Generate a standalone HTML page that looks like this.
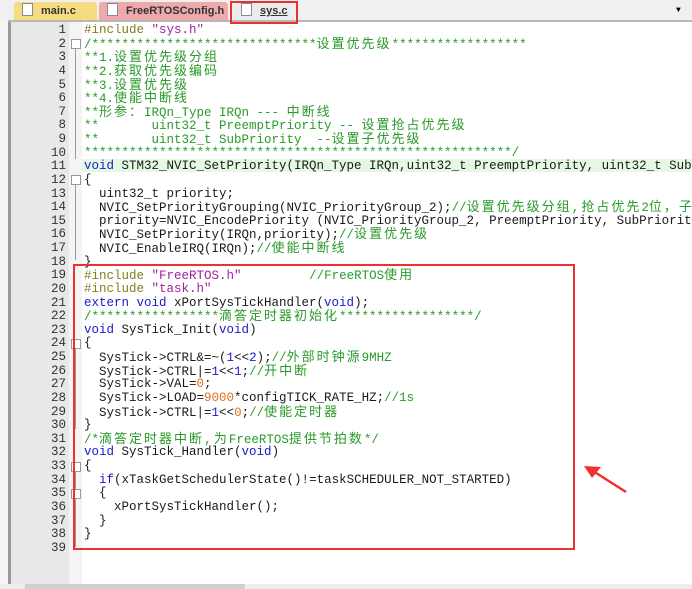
<!DOCTYPE html>
<html><head><meta charset="utf-8"><style>
body{margin:0;width:692px;height:589px;background:#fff;overflow:hidden;position:relative;font-family:"Liberation Mono","Noto Sans CJK SC",monospace}
.tabbar{position:absolute;left:0;top:0;width:692px;height:20px;background:#f0f0f0;border-bottom:2px solid #b8b8b8}
.tab{position:absolute;top:2px;height:18px;font:bold 11px "Liberation Sans",sans-serif;line-height:18px;color:#333;border-radius:3px 3px 0 0}
.doc{display:inline-block;width:9px;height:11px;background:#fff;border:1px solid #889;vertical-align:-2px;margin:0 8px 0 8px}
.left{position:absolute;left:0;top:20px;width:8px;height:569px;background:#f4f4f4}
.frame{position:absolute;left:8px;top:22px;width:3px;height:562px;background:#9a9a9a}
.gutter{position:absolute;left:11px;top:22px;width:58px;height:562px;background:#e8e8e8}
.fold{position:absolute;left:69px;top:22px;width:13px;height:562px;background:#f4f4f4}
.hl{position:absolute;left:82px;top:159px;width:610px;height:13px;background:#e4f8e4}
.nums{position:absolute;left:11px;top:24px;width:55px;text-align:right;font-size:12.5px;color:#333}
.nums div,.code div{height:13.63px;line-height:13.63px;white-space:pre}
.code{position:absolute;left:84px;top:24px;width:608px;overflow:hidden;font-size:12.5px;color:#1a1a1a}
.g{color:#2a9a2a}.b{color:#1a1acc}.p{color:#808020}.s{color:#a020a0}.n{color:#e07020}
.c{letter-spacing:2px;font-size:13px;line-height:13px}
.fb{position:absolute;left:71px;width:8px;height:8px;border:1px solid #999;background:#fff}
.vl{position:absolute;left:75px;width:1px;background:#999}
.red{position:absolute;left:73px;top:264px;width:498px;height:282px;border:2px solid #f03030}
.tabred{position:absolute;left:230px;top:1px;width:64px;height:19px;border:2px solid #e83030}
.sb{position:absolute;left:0;top:584px;width:692px;height:5px;background:#eee}
</style></head><body>
<div class="tabbar"></div>
<div class="tab" style="left:14px;width:83px;background:#f6dc80"><span class="doc"></span>main.c</div>
<div class="tab" style="left:99px;width:129px;background:#eeaaaa"><span class="doc"></span>FreeRTOSConfig.h</div>
<div class="tab" style="left:233px;width:58px;background:#ececec"><span class="doc"></span><u>sys.c</u></div>
<div class="tabred"></div>
<div style="position:absolute;left:676px;top:6px;font-size:8px">▼</div>
<div class="left"></div><div class="frame"></div><div class="gutter"></div><div class="fold"></div>
<div class="hl"></div>
<div class="nums"><div>1</div><div>2</div><div>3</div><div>4</div><div>5</div><div>6</div><div>7</div><div>8</div><div>9</div><div>10</div><div>11</div><div>12</div><div>13</div><div>14</div><div>15</div><div>16</div><div>17</div><div>18</div><div>19</div><div>20</div><div>21</div><div>22</div><div>23</div><div>24</div><div>25</div><div>26</div><div>27</div><div>28</div><div>29</div><div>30</div><div>31</div><div>32</div><div>33</div><div>34</div><div>35</div><div>36</div><div>37</div><div>38</div><div>39</div></div>
<div class="fb" style="top:39px"></div><div class="vl" style="top:49px;height:110px"></div>
<div class="fb" style="top:175px"></div><div class="vl" style="top:185px;height:75px"></div>
<div class="fb" style="top:339px"></div><div class="vl" style="top:349px;height:80px"></div>
<div class="fb" style="top:462px"></div><div class="vl" style="top:472px;height:75px"></div>
<div class="fb" style="top:489px"></div>
<div class="code"><div><span class="p">#include</span> <span class="s">"sys.h"</span></div><div><span class="g">/******************************<span class="c">设置优先级</span>******************</span></div><div><span class="g">**1.<span class="c">设置优先级分组</span></span></div><div><span class="g">**2.<span class="c">获取优先级编码</span></span></div><div><span class="g">**3.<span class="c">设置优先级</span></span></div><div><span class="g">**4.<span class="c">使能中断线</span></span></div><div><span class="g">**<span class="c">形参：</span>IRQn_Type IRQn --- <span class="c">中断线</span></span></div><div><span class="g">**       uint32_t PreemptPriority -- <span class="c">设置抢占优先级</span></span></div><div><span class="g">**       uint32_t SubPriority  --<span class="c">设置子优先级</span></span></div><div><span class="g">*********************************************************/</span></div><div><span class="b">void</span> STM32_NVIC_SetPriority(IRQn_Type IRQn,uint32_t PreemptPriority, uint32_t SubPriority)</div><div>{</div><div>  uint32_t priority;</div><div>  NVIC_SetPriorityGrouping(NVIC_PriorityGroup_2);<span class="g">//<span class="c">设置优先级分组,抢占优先</span>2<span class="c">位，子</span></span></div><div>  priority=NVIC_EncodePriority (NVIC_PriorityGroup_2, PreemptPriority, SubPriority);</div><div>  NVIC_SetPriority(IRQn,priority);<span class="g">//<span class="c">设置优先级</span></span></div><div>  NVIC_EnableIRQ(IRQn);<span class="g">//<span class="c">使能中断线</span></span></div><div>}</div><div><span class="p">#include</span> <span class="s">"FreeRTOS.h"</span>         <span class="g">//FreeRTOS<span class="c">使用</span></span></div><div><span class="p">#include</span> <span class="s">"task.h"</span></div><div><span class="b">extern void</span> xPortSysTickHandler(<span class="b">void</span>);</div><div><span class="g">/*****************<span class="c">滴答定时器初始化</span>******************/</span></div><div><span class="b">void</span> SysTick_Init(<span class="b">void</span>)</div><div>{</div><div>  SysTick-&gt;CTRL&amp;=~(<span class="b">1</span>&lt;&lt;<span class="b">2</span>);<span class="g">//<span class="c">外部时钟源</span>9MHZ</span></div><div>  SysTick-&gt;CTRL|=<span class="b">1</span>&lt;&lt;<span class="b">1</span>;<span class="g">//<span class="c">开中断</span></span></div><div>  SysTick-&gt;VAL=<span class="n">0</span>;</div><div>  SysTick-&gt;LOAD=<span class="n">9000</span>*configTICK_RATE_HZ;<span class="g">//1s</span></div><div>  SysTick-&gt;CTRL|=<span class="b">1</span>&lt;&lt;<span class="n">0</span>;<span class="g">//<span class="c">使能定时器</span></span></div><div>}</div><div><span class="g">/*<span class="c">滴答定时器中断,为</span>FreeRTOS<span class="c">提供节拍数</span>*/</span></div><div><span class="b">void</span> SysTick_Handler(<span class="b">void</span>)</div><div>{</div><div>  <span class="b">if</span>(xTaskGetSchedulerState()!=taskSCHEDULER_NOT_STARTED)</div><div>  {</div><div>    xPortSysTickHandler();</div><div>  }</div><div>}</div><div> </div></div>
<div class="red"></div>
<svg style="position:absolute;left:0;top:0" width="692" height="589"><path d="M626 492 L593 471" stroke="#f03030" stroke-width="2.5"/><polygon points="584,466 601,467 592,478" fill="#f03030"/></svg>
<div class="sb"><div style="position:absolute;left:25px;width:220px;height:5px;background:#d0d0d0"></div></div>
</body></html>
